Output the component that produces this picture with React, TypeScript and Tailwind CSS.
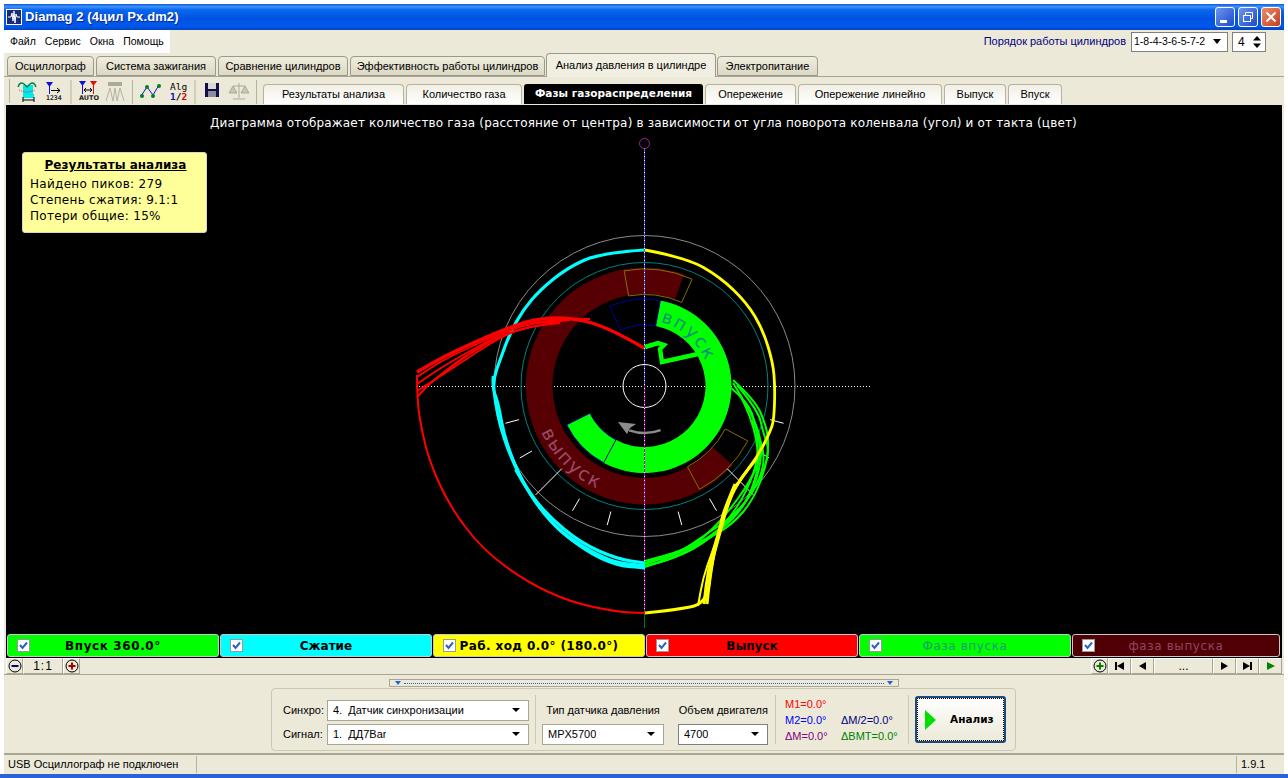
import React from "react";

const CX = 644.5;
const CY = 386;
const VERDANA = "font-['DejaVu_Sans',sans-serif]";
const TAHOMA = "font-['Liberation_Sans',sans-serif]";

type Pt = [number, number];

function polar(r: number, deg: number): Pt {
  const a = (deg * Math.PI) / 180;
  return [CX + r * Math.sin(a), CY - r * Math.cos(a)];
}

function sector(r1: number, r2: number, a: number, b: number) {
  const large = b - a > 180 ? 1 : 0;
  const [x1, y1] = polar(r2, a);
  const [x2, y2] = polar(r2, b);
  const [x3, y3] = polar(r1, b);
  const [x4, y4] = polar(r1, a);
  return `M${x1} ${y1}A${r2} ${r2} 0 ${large} 1 ${x2} ${y2}L${x3} ${y3}A${r1} ${r1} 0 ${large} 0 ${x4} ${y4}Z`;
}

function arc(r: number, a: number, b: number) {
  const [x1, y1] = polar(r, a);
  const [x2, y2] = polar(r, b);
  const sweep = b > a ? 1 : 0;
  const large = Math.abs(b - a) > 180 ? 1 : 0;
  return `M${x1} ${y1}A${r} ${r} 0 ${large} ${sweep} ${x2} ${y2}`;
}

// smooth line through the points
function curve(pts: Pt[]) {
  let d = `M${pts[0][0]} ${pts[0][1]}`;
  for (let i = 1; i < pts.length - 1; i++) {
    const mx = (pts[i][0] + pts[i + 1][0]) / 2;
    const my = (pts[i][1] + pts[i + 1][1]) / 2;
    d += `Q${pts[i][0]} ${pts[i][1]} ${mx} ${my}`;
  }
  const last = pts[pts.length - 1];
  return d + `L${last[0]} ${last[1]}`;
}

const redFan: [Pt[], number][] = [
  [[[644, 348], [613, 330], [577, 318], [540, 318], [510, 327], [477, 341], [443, 357], [417, 372]], 3.4],
  [[[590, 319], [550, 319], [510, 329], [477, 344], [443, 360], [417, 377]], 1.8],
  [[[570, 320], [535, 322], [505, 332], [477, 347], [445, 365], [417, 384]], 1.8],
  [[[560, 323], [530, 326], [505, 335], [480, 350], [450, 370], [417, 391]], 1.8],
  [[[570, 319], [540, 325], [510, 332], [483, 345], [457, 362], [430, 383], [417, 397]], 2.2],
];

const cyanFan: [Pt[], number][] = [
  [[[644, 250], [600, 253], [567, 268], [540, 290], [523, 310], [510, 333], [500, 360], [493, 380], [495, 400], [500, 425], [509, 453], [525, 487], [548, 516], [581, 543], [617, 559], [645, 563]], 3.2],
  [[[493, 376], [492, 388], [498, 400], [505, 440], [524, 486], [548, 520], [580, 547], [615, 564], [645, 566]], 2.6],
  [[[498, 415], [509, 452], [527, 490], [552, 524], [585, 551], [617, 566], [645, 568]], 2.6],
  [[[505, 440], [520, 478], [545, 518], [575, 545], [610, 561], [645, 565]], 1.6],
  [[[515, 470], [535, 505], [560, 530], [592, 552], [625, 565], [645, 569]], 1.6],
];

const yellowFan: [Pt[], number][] = [
  [[[645, 250], [687, 258], [720, 277], [747, 303], [763, 330], [773, 363], [775, 387], [774, 420], [770, 432], [757, 458], [737, 483], [727, 507], [720, 533], [711, 565], [707, 604], [673, 610], [645, 613]], 2.8],
  [[[757, 458], [736, 484], [725, 510], [717, 538], [708, 570], [704, 604]], 3],
  [[[737, 483], [727, 503], [722, 525], [711, 555], [703, 578], [698, 606]], 2],
  [[[735, 484], [723, 512], [720, 530], [714, 552], [709, 585], [707, 604]], 3],
];

const greenFan: Pt[][] = [
  [[733, 380], [755, 400], [766, 425], [769, 445], [765, 470], [753, 500], [733, 524], [703, 542], [670, 556], [645, 564]],
  [[733, 383], [750, 410], [762, 440], [760, 470], [748, 500], [730, 520], [702, 545], [672, 559], [645, 566]],
  [[731, 388], [748, 402], [756, 425], [759, 455], [748, 490], [725, 525], [695, 548], [665, 561], [645, 566]],
  [[760, 440], [766, 455], [758, 485], [735, 515], [705, 535], [680, 552], [645, 563]],
  [[752, 420], [765, 448], [750, 482], [728, 512], [712, 530], [690, 548], [660, 560]],
  [[737, 385], [758, 410], [763, 432], [770, 452], [760, 480], [742, 508], [715, 534], [685, 550], [645, 561]],
  [[740, 395], [752, 418], [760, 460], [752, 490], [738, 515], [708, 540], [680, 555], [645, 567]],
];

const ticks = [105, 120, 150, 165, 195, 210, 240, 255];

function Chart() {
  const sectorsOlive = [sector(91.5, 117, -10, 24), sector(91.5, 117, 118, 152)];
  const sectorsNavy = [sector(61, 87, -23.5, 10.5), sector(61, 87, 208, 243.5)];
  return (
    <svg className="absolute left-0 top-0" width="1276" height="529" viewBox="6 105 1276 529">
      <defs>
        <path id="inletPath" d={arc(66, 14, 72)} />
        <path id="exhaustPath" d={arc(113, 246, 196)} />
      </defs>
      <line x1="416" y1="386.5" x2="872" y2="386.5" stroke="#fff" strokeDasharray="1 2" />
      <circle cx={CX} cy={CY} r="150.5" fill="none" stroke="#8a8a8a" />
      <circle cx={CX} cy={CY} r="123.5" fill="none" stroke="#008080" />
      <circle cx={CX} cy={CY} r="21.5" fill="none" stroke="#fff" />
      <path d={sector(92, 118.5, 132, 379.5)} fill="#560004" />
      <path d={sector(61, 87, 10.5, 243.5)} fill="#00ff00" />
      {sectorsOlive.map((d) => (
        <path key={d} d={d} fill="none" stroke="#807000" />
      ))}
      {sectorsNavy.map((d) => (
        <path key={d} d={d} fill="none" stroke="#0000a0" />
      ))}
      <text className="font-['DejaVu_Sans',sans-serif]" fontSize="18" fill="#0c8f7c" letterSpacing="1.8">
        <textPath href="#inletPath">впуск</textPath>
      </text>
      <text className="font-['DejaVu_Sans',sans-serif]" fontSize="19" fill="#9a4a68" letterSpacing="1.8">
        <textPath href="#exhaustPath">выпуск</textPath>
      </text>
      {ticks.map((t) => {
        const [x1, y1] = polar(130, t);
        const [x2, y2] = polar(144, t);
        return <line key={t} x1={x1} y1={y1} x2={x2} y2={y2} stroke="#fff" />;
      })}
      <line x1={polar(117, 225)[0]} y1={polar(117, 225)[1]} x2={polar(154, 225)[0]} y2={polar(154, 225)[1]} stroke="#fff" />
      <line x1={polar(117, 135)[0]} y1={polar(117, 135)[1]} x2={polar(154, 135)[0]} y2={polar(154, 135)[1]} stroke="#fff" />

      <line x1="644.5" y1="148" x2="644.5" y2="386" stroke="#5050ff" />
      <line x1="644.5" y1="386" x2="644.5" y2="613" stroke="#c000c0" />
      <line x1="644.5" y1="148" x2="644.5" y2="613" stroke="#fff" strokeDasharray="1 3" />
      <line x1="644.5" y1="613" x2="644.5" y2="628" stroke="#008000" />
      <circle cx="644.5" cy="143.5" r="5" fill="none" stroke="#a020a0" />

      <path d={arc(47, 160, 199)} fill="none" stroke="#8c8c8c" strokeWidth="2.5" />
      <polygon points="618,422 636,424 630,428 627,434" fill="#8c8c8c" />

      {cyanFan.map(([p, w], i) => (
        <path key={i} d={curve(p)} fill="none" stroke="#00ffff" strokeWidth={w} />
      ))}
      {greenFan.map((p, i) => (
        <path key={i} d={curve(p)} fill="none" stroke="#00ff00" strokeWidth="2" />
      ))}
      {yellowFan.map(([p, w], i) => (
        <path key={i} d={curve(p)} fill="none" stroke="#ffff00" strokeWidth={w} />
      ))}
      <path d="M645 347L658 343L664 345L660 349L662 362L698 354" fill="none" stroke="#00ff00" strokeWidth="4.5" />
      {redFan.map(([p, w], i) => (
        <path key={i} d={curve(p)} fill="none" stroke="#ff0000" strokeWidth={w} />
      ))}
      <path
        d={curve([[417, 375], [417, 400], [422, 432], [430, 463], [450, 507], [483, 550], [527, 582], [570, 602], [617, 612], [645, 613]])}
        fill="none"
        stroke="#ff0000"
        strokeWidth="2"
      />
    </svg>
  );
}

function MainTab({ label, active, w }: { label: string; active?: boolean; w: string }) {
  return (
    <div
      className={
        active
          ? `${w} h-[24px] -mb-px relative z-10 flex items-center justify-center whitespace-nowrap rounded-t-[4px] border border-b-0 border-[#9a9a8c] bg-[#f1efe2] text-[11px] text-black`
          : `${w} h-[20px] flex items-center justify-center whitespace-nowrap rounded-t-[4px] border border-[#9a9a8c] bg-gradient-to-b from-[#efedde] to-[#dcd8c4] text-[11px] text-black`
      }
    >
      {label}
    </div>
  );
}

function SubTab({ label, active, w }: { label: string; active?: boolean; w: string }) {
  return (
    <div
      className={
        active
          ? `${w} h-[20px] flex items-center justify-center whitespace-nowrap rounded-t-[3px] bg-black font-['DejaVu_Sans',sans-serif] text-[10.5px] font-bold text-white`
          : `${w} h-[20px] flex items-center justify-center whitespace-nowrap rounded-t-[4px] border border-b-0 border-[#b5b3a3] bg-gradient-to-b from-[#f1efe4] to-white text-[11px] text-black`
      }
    >
      {label}
    </div>
  );
}

function Check() {
  return (
    <span className="w-[13px] h-[13px] shrink-0 flex items-center justify-center border border-[#9a9a9a] bg-white">
      <svg width="9" height="9" viewBox="0 0 9 9">
        <path d="M1 4L3.5 7L8 1.5" fill="none" stroke="#2f5fc8" strokeWidth="2" />
      </svg>
    </span>
  );
}

function LegendItem({ label, bg, text, w, track = "tracking-[0.6px]", bold }: { label: string; bg: string; text: string; w: string; track?: string; bold?: boolean }) {
  return (
    <div className={`${w} ${bg} h-[23px] flex items-center pl-[9px] rounded-[3px] border border-[#c8c8c8] text-[12px] ${track} ${bold ? "font-bold" : ""} ${text}`}>
      <Check />
      <span className="flex-1 text-center pr-[22px]">{label}</span>
    </div>
  );
}

function Combo({ value, w, dark }: { value: string; w: string; dark?: boolean }) {
  return (
    <div className={`${w} h-[21px] flex items-center justify-between pl-[5px] pr-[4px] border bg-white text-[11px] text-black ${dark ? "border-[#7f7f7f]" : "border-[#a8a794]"}`}>
      <span className="truncate whitespace-pre">{value}</span>
      <svg width="10" height="6" viewBox="0 0 10 6" className="mr-[3px] shrink-0">
        <path d="M1 1H9L5 5Z" fill="#000" />
      </svg>
    </div>
  );
}

function NavBtn({ w, children }: { w: string; children: React.ReactNode }) {
  return (
    <div className={`${w} h-[16px] flex items-center justify-center bg-[#ece9d8] border-r border-b border-[#a9a794] border-t border-l border-t-white border-l-white text-[12px]`}>
      {children}
    </div>
  );
}

function ZoomIcon({ color, plus }: { color: string; plus?: boolean }) {
  return (
    <svg width="14" height="14" viewBox="0 0 14 14">
      <circle cx="7" cy="7" r="6" fill="none" stroke="#000" />
      <rect x="3.5" y="6" width="7" height="2" fill={color} />
      {plus && <rect x="6" y="3.5" width="2" height="7" fill={color} />}
    </svg>
  );
}

function Toolbar() {
  return (
    <div className="h-[29px] shrink-0 flex items-center border-t border-[#a6a595] bg-[#ece9d8] pl-[5px]">
      <span className="w-px h-[24px] bg-[#b4b2a0]" />
      <svg width="243" height="26" viewBox="14 78 243 26" className="ml-[4px] shrink-0">
        {/* scope */}
        <rect x="23" y="85" width="10" height="9" fill="#00e8e8" />
        <rect x="23" y="94" width="11" height="4" fill="#00e8e8" />
        <path d="M18 87Q20 81 24 84L27 87L30 84Q34 81 36 87" fill="none" stroke="#008040" strokeWidth="1.4" />
        <path d="M19 90Q27 94 35 90" fill="none" stroke="#e03030" strokeDasharray="1 1" />
        <path d="M23 100H34M23 97V102M34 97V102" stroke="#000" fill="none" />
        {/* marker + 1234 */}
        <path d="M46 82H53L49.5 87Z" fill="#1010e0" />
        <line x1="49.5" y1="84" x2="49.5" y2="94" stroke="#1010e0" />
        <path d="M51 90.5H60M57 88L60 90.5L57 93" stroke="#000" fill="none" />
        <text x="46" y="100" fontSize="6.5" fontWeight="bold" className="font-['DejaVu_Sans_Mono',monospace]" fill="#222">1234</text>
        {/* auto */}
        <path d="M79 81H86L82.5 86Z" fill="#1010e0" />
        <path d="M90 81H97L93.5 86Z" fill="#e01010" />
        <line x1="82.5" y1="83" x2="82.5" y2="94" stroke="#1010e0" />
        <line x1="93.5" y1="83" x2="93.5" y2="94" stroke="#e01010" />
        <path d="M84 90H92M86 88L84 90L86 92M90 88L92 90L90 92" stroke="#000" fill="none" />
        <text x="79" y="100" fontSize="6.5" fontWeight="bold" className="font-['DejaVu_Sans',sans-serif]" fill="#222">AUTO</text>
        {/* disabled peaks */}
        <rect x="108" y="82" width="14" height="4" fill="#aaa99c" />
        <path d="M106 101L110 88L113 101L115 88L117 101L120 88L124 101" fill="none" stroke="#b4b3a5" />
        {/* line */}
        <path d="M141 96L147 87L153 95L159 85" fill="none" stroke="#1010e0" />
        <rect x="140" y="94" width="4" height="4" rx="2" fill="#008020" />
        <rect x="145" y="85" width="4" height="4" rx="2" fill="#008020" />
        <rect x="151" y="94" width="4" height="4" rx="2" fill="#008020" />
        <rect x="157" y="84" width="4" height="4" rx="2" fill="#008020" />
        {/* alg */}
        <text x="170" y="90" fontSize="9.5" className="font-['DejaVu_Sans_Mono',monospace]" fill="#000">Alg</text>
        <text x="170" y="100" fontSize="9.5" fontWeight="bold" className="font-['DejaVu_Sans_Mono',monospace]">
          <tspan fill="#1010c0">1</tspan>
          <tspan fill="#000">/</tspan>
          <tspan fill="#e00000">2</tspan>
        </text>
        {/* disk */}
        <rect x="205" y="83" width="14" height="14" fill="#101048" />
        <rect x="208" y="83" width="8" height="6" fill="#d8d8d8" />
        <rect x="208" y="91" width="8" height="6" fill="#8a8aa0" />
        {/* scale */}
        <path d="M239 83V98M233 86H245M233 86L229 93H237ZM245 86L241 93H249ZM233 99H245" fill="#c8c7b8" stroke="#aaa99c" />
        <line x1="71" x2="71" y1="80" y2="104" stroke="#b4b2a0" />
        <line x1="132.5" x2="132.5" y1="80" y2="104" stroke="#b4b2a0" />
        <line x1="195" x2="195" y1="80" y2="104" stroke="#b4b2a0" />
        <line x1="256.5" x2="256.5" y1="80" y2="104" stroke="#b4b2a0" />
      </svg>
      <div className="flex items-end self-end gap-[2px] ml-[6px] pb-px">
        <SubTab label="Результаты анализа" w="w-[141px]" />
        <SubTab label="Количество газа" w="w-[116px]" />
        <SubTab label="Фазы газораспределения" w="w-[179px]" active />
        <SubTab label="Опережение" w="w-[91px]" />
        <SubTab label="Опережение линейно" w="w-[144px]" />
        <SubTab label="Выпуск" w="w-[62px]" />
        <SubTab label="Впуск" w="w-[54px]" />
      </div>
    </div>
  );
}

export default function App() {
  return (
    <div className={`w-[1288px] h-[778px] overflow-hidden bg-white flex flex-col pt-[4px] ${TAHOMA}`}>
      <div className="flex-1 min-h-0 mx-[4px] flex flex-col bg-[#ece9d8]">
        {/* title bar */}
        <div className="h-[26px] shrink-0 flex items-center pl-[2px] pr-[3px] bg-[linear-gradient(to_bottom,#0a58dc_0%,#3f92fb_10%,#0a68ee_22%,#0053e1_55%,#0058ee_85%,#0045c0_100%)]">
          <svg width="16" height="16" viewBox="0 0 16 16" className="shrink-0">
            <rect x="0.5" y="0.5" width="15" height="15" fill="#1a2c78" stroke="#ffffff" />
            <path d="M2 8H5L6 4L7 12L8 2L9 14L10 5L11 8H14" fill="none" stroke="#ffffff" />
          </svg>
          <span className="ml-[3px] text-[13px] tracking-[0.1px] font-bold text-white [text-shadow:1px_1px_#0a2a90]">
            Diamag 2 (4цил Px.dm2)
          </span>
          <div className="ml-auto flex gap-[3px]">
            <div className="w-[20px] h-[20px] rounded-[3px] border border-white bg-gradient-to-br from-[#6d94ee] to-[#1c48c8] flex items-end pl-[4px] pb-[3px]">
              <span className="w-[7px] h-[3px] bg-white" />
            </div>
            <div className="w-[20px] h-[20px] rounded-[3px] border border-white bg-gradient-to-br from-[#6d94ee] to-[#1c48c8] flex items-center justify-center">
              <svg width="12" height="12" viewBox="0 0 12 12">
                <path d="M3.5 1.5H10.5V7.5H8.5M3.5 1.5V4" fill="none" stroke="#fff" />
                <rect x="1.5" y="4.5" width="7" height="6" fill="none" stroke="#fff" />
              </svg>
            </div>
            <div className="w-[20px] h-[20px] rounded-[3px] border border-white bg-gradient-to-br from-[#ec8a68] to-[#c83a14] flex items-center justify-center">
              <svg width="12" height="12" viewBox="0 0 12 12">
                <path d="M1.5 1.5L10.5 10.5M10.5 1.5L1.5 10.5" stroke="#fff" strokeWidth="2" />
              </svg>
            </div>
          </div>
        </div>

        {/* menu */}
        <div className="h-[23px] shrink-0 flex items-center">
          <div className="w-[166px] h-[23px] bg-white flex items-center gap-[9px] pl-[6px] text-[10.5px] text-black">
            <span>Файл</span>
            <span>Сервис</span>
            <span>Окна</span>
            <span>Помощь</span>
          </div>
          <span className="ml-auto text-[11px] text-[#000080] whitespace-nowrap">Порядок работы цилиндров</span>
          <div className="ml-[5px] w-[97px] h-[20px] flex items-center justify-between pl-[2px] pr-[6px] border border-[#7f7f7f] bg-white text-[10.5px] text-black">
            <span>1-8-4-3-6-5-7-2</span>
            <svg width="8" height="5" viewBox="0 0 8 5">
              <path d="M0 0H8L4 5Z" fill="#000" />
            </svg>
          </div>
          <div className="ml-[4px] mr-[18px] w-[34px] h-[20px] flex items-center justify-between pl-[5px] pr-[3px] border border-[#7f7f7f] bg-white text-[12px] text-black">
            <span>4</span>
            <svg width="10" height="14" viewBox="0 0 10 14">
              <path d="M1 5.5H9L5 1Z M1 8.5H9L5 13Z" fill="#000" />
            </svg>
          </div>
        </div>

        {/* main tabs */}
        <div className="h-[23px] shrink-0 flex items-end gap-[2px] pl-[3px]">
          <MainTab label="Осциллограф" w="w-[87px]" />
          <MainTab label="Система зажигания" w="w-[120px]" />
          <MainTab label="Сравнение цилиндров" w="w-[130px]" />
          <MainTab label="Эффективность работы цилиндров" w="w-[195px]" />
          <MainTab label="Анализ давления в цилиндре" w="w-[170px] -mx-[1px]" active />
          <MainTab label="Электропитание" w="w-[101px]" />
        </div>

        <Toolbar />

        {/* canvas */}
        <div className="h-[553px] shrink-0 mx-[2px] bg-black flex flex-col">
          <div className={`relative h-[529px] shrink-0 overflow-hidden ${VERDANA}`}>
            <Chart />
            <div className="absolute left-0 right-[1px] top-[9px] text-center text-[12px] text-white tracking-[0.17px] whitespace-nowrap">
              Диаграмма отображает количество газа (расстояние от центра) в зависимости от угла поворота коленвала (угол) и от такта (цвет)
            </div>
            <div className="absolute left-[16px] top-[47px] w-[185px] h-[81px] rounded-[3px] border border-[#d8d8c0] bg-[#ffff99] pl-[7px] pt-[4px] text-[12px] leading-[16px] tracking-[0.3px] text-black">
              <div className="text-center font-bold underline pr-[5px] tracking-normal">Результаты анализа</div>
              <div className="mt-[3px]">Найдено пиков: 279</div>
              <div>Степень сжатия: 9.1:1</div>
              <div>Потери общие: 15%</div>
            </div>
          </div>
          <div className={`h-[23px] shrink-0 flex gap-px pl-[1px] ${VERDANA}`}>
            <LegendItem label="Впуск 360.0°" bg="bg-[#00ff00]" text="text-black" w="w-[212px]" bold />
            <LegendItem label="Сжатие" bg="bg-[#00ffff]" text="text-black" w="w-[212px]" bold track="tracking-[0px]" />
            <LegendItem label="Раб. ход 0.0° (180.0°)" bg="bg-[#ffff00]" text="text-black" w="w-[212px]" bold track="tracking-[0.4px]" />
            <LegendItem label="Выпуск" bg="bg-[#ff0000]" text="text-black" w="w-[212px]" bold track="tracking-[0px]" />
            <LegendItem label="Фаза впуска" bg="bg-[#00ff00]" text="text-[#1a9a70]" w="w-[212px]" />
            <LegendItem label="фаза выпуска" bg="bg-[#500004]" text="text-[#8f4562]" w="w-[208px]" />
          </div>
        </div>

        {/* zoom and navigation */}
        <div className="h-[17px] shrink-0 flex items-start px-[2px] border-b border-[#a9a794]">
          <NavBtn w="w-[17px]"><ZoomIcon color="#000080" /></NavBtn>
          <NavBtn w="w-[40px]"><span className="tracking-[1px]">1:1</span></NavBtn>
          <NavBtn w="w-[17px]"><ZoomIcon color="#a00000" plus /></NavBtn>
          <div className="flex-1" />
          <NavBtn w="w-[17px] border-l-[#2b5fd0]"><ZoomIcon color="#008000" plus /></NavBtn>
          <NavBtn w="w-[23px]"><span className="w-[2px] h-[8px] bg-black" /><span className="border-y-[4px] border-r-[7px] border-y-transparent border-r-black" /></NavBtn>
          <NavBtn w="w-[23px]"><span className="border-y-[4px] border-r-[7px] border-y-transparent border-r-black" /></NavBtn>
          <NavBtn w="w-[59px]">...</NavBtn>
          <NavBtn w="w-[23px]"><span className="border-y-[4px] border-l-[7px] border-y-transparent border-l-black" /></NavBtn>
          <NavBtn w="w-[23px]"><span className="border-y-[4px] border-l-[7px] border-y-transparent border-l-black" /><span className="w-[2px] h-[8px] bg-black" /></NavBtn>
          <NavBtn w="w-[23px]"><span className="border-y-[4px] border-l-[8px] border-y-transparent border-l-[#008000]" /></NavBtn>
        </div>

        {/* bottom panel */}
        <div className="h-[79px] shrink-0 flex flex-col items-center border-b border-[#a9a794]">
          <div className="mt-[4px] ml-[-1px] w-[510px] h-[8px] border border-[#a9a794] flex items-center justify-between px-[5px]">
            <span className="border-x-[3px] border-t-[4px] border-x-transparent border-t-[#2b5fd0]" />
            <span className="flex-1 mx-[3px] border-t border-dotted border-[#2b5fd0]" />
            <span className="border-x-[3px] border-t-[4px] border-x-transparent border-t-[#2b5fd0]" />
          </div>
          <div className="mt-[1px] ml-[-1px] w-[745px] h-[63px] rounded-[4px] border border-[#cbc9b4] flex items-center text-[11px] text-black pl-[11px]">
            <div className="shrink-0 flex flex-col gap-[3px] mt-[5px]">
              <div className="flex items-center">
                <span className="w-[44px]">Синхро:</span>
                <Combo value="4.  Датчик синхронизации" w="w-[202px]" />
              </div>
              <div className="flex items-center">
                <span className="w-[44px]">Сигнал:</span>
                <Combo value="1.  ДД7Bar" w="w-[202px]" />
              </div>
            </div>
            <span className="shrink-0 w-px h-[49px] bg-[#cbc9b4] ml-[6px]" />
            <div className="shrink-0 ml-[6px] w-[122px] flex flex-col gap-[3px] mt-[5px] items-center">
              <span className="h-[21px] flex items-center whitespace-nowrap">Тип датчика давления</span>
              <Combo value="MPX5700" w="w-[122px]" />
            </div>
            <div className="shrink-0 ml-[12px] w-[92px] flex flex-col gap-[3px] mt-[5px] items-end">
              <span className="h-[21px] flex items-center whitespace-nowrap">Объем двигателя</span>
              <Combo value="4700" w="w-[90px]" dark />
            </div>
            <span className="shrink-0 w-px h-[49px] bg-[#cbc9b4] ml-[7px]" />
            <div className="shrink-0 ml-[9px] w-[122px] grid grid-cols-[56px_66px] leading-[16px]">
              <span className="text-[#ff0000]">M1=0.0°</span>
              <span />
              <span className="text-[#0000ff]">M2=0.0°</span>
              <span className="text-[#000080]">ΔM/2=0.0°</span>
              <span className="text-[#800080]">ΔM=0.0°</span>
              <span className="text-[#008000]">ΔBMT=0.0°</span>
            </div>
            <span className="shrink-0 w-px h-[49px] bg-[#cbc9b4] ml-[1px]" />
            <div className="shrink-0 ml-[6px] w-[91px] h-[47px] flex items-center rounded-[3px] border-2 border-[#1c4a80] bg-gradient-to-b from-white to-[#ece9d8] outline-1 outline-dotted -outline-offset-3 outline-black">
              <svg width="11" height="20" viewBox="0 0 11 20" className="ml-[8px]">
                <path d="M0 0L11 10L0 20Z" fill="#00e000" />
              </svg>
              <span className={`ml-[14px] font-bold text-[10.5px] ${VERDANA}`}>Анализ</span>
            </div>
          </div>
        </div>

        {/* status bar */}
        <div className="h-[20px] shrink-0 flex items-center border-t border-[#a9a794] text-[11px] text-black">
          <span className="w-[192px] pl-[4px] whitespace-nowrap">USB Осциллограф не подключен</span>
          <span className="w-px h-[17px] bg-[#b4b2a0]" />
          <span className="flex-1" />
          <span className="w-px h-[17px] bg-[#b4b2a0]" />
          <span className="w-[47px] pl-[4px]">1.9.1</span>
        </div>
      </div>
      {/* taskbar strip */}
      <div className="h-[4px] shrink-0 bg-[#2a63d8]" />
    </div>
  );
}
